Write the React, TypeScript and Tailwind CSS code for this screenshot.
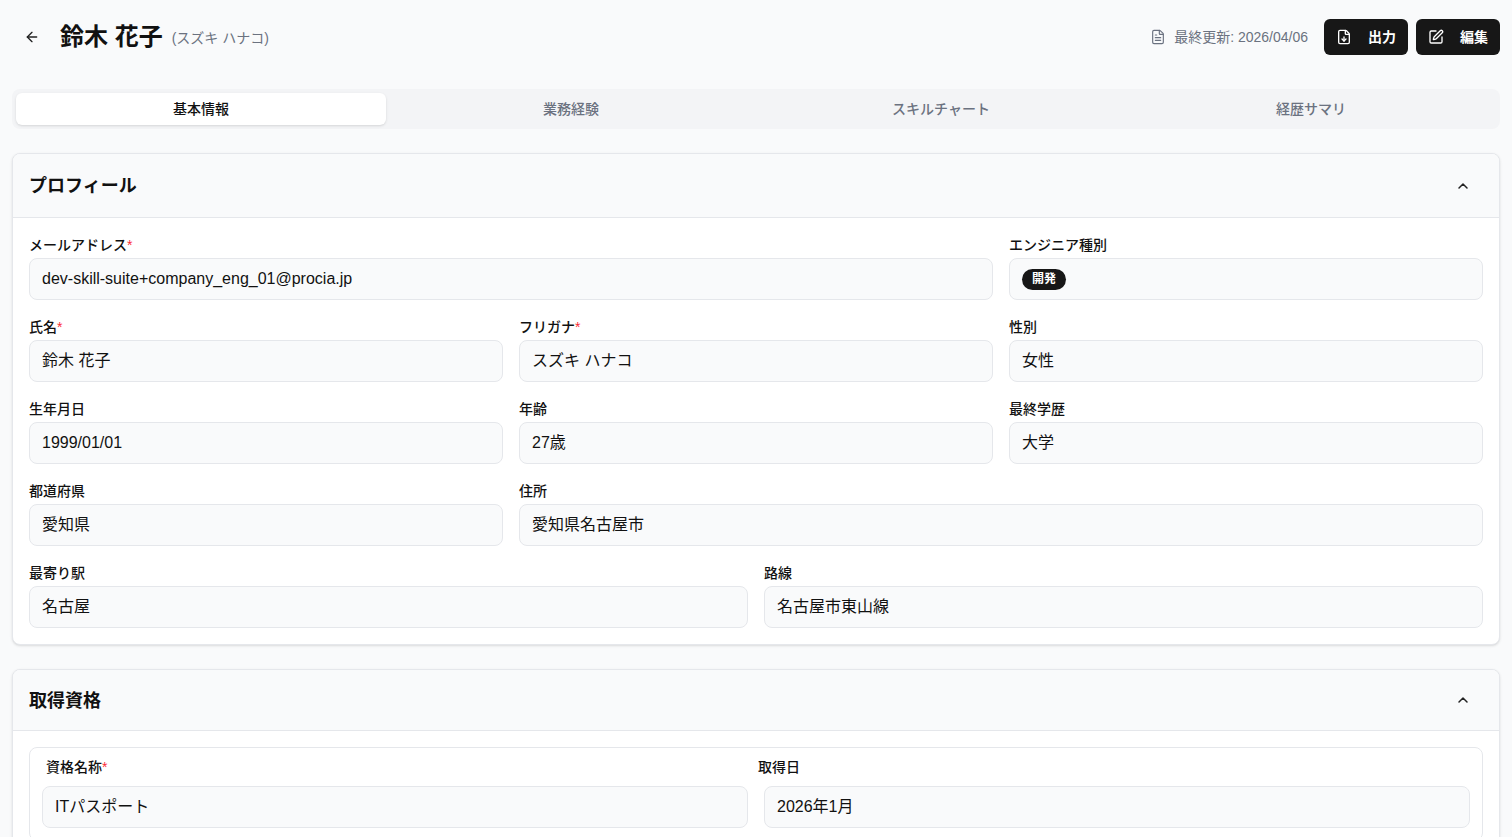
import React from 'react';
import { ArrowLeft, FileText, FileDown, SquarePen, ChevronUp } from 'lucide-react';

const FONT = { fontFamily: '"Liberation Sans", "Noto Sans CJK JP", sans-serif' };

const TABS = ['基本情報', '業務経験', 'スキルチャート', '経歴サマリ'];

const Field: React.FC<{ label: string; required?: boolean; className?: string; children: React.ReactNode }> = ({
  label,
  required,
  className = '',
  children,
}) => (
  <div className={className}>
    <div className="h-5 mb-1 pt-px text-sm font-medium text-[#111] leading-5">
      {label}
      {required && <span className="text-red-500">*</span>}
    </div>
    <div className="h-[42px] flex items-center px-3 rounded-lg border border-[#e5e7eb] bg-[#f9fafb] text-base text-[#111]">
      {children}
    </div>
  </div>
);

const SectionHeader: React.FC<{ title: string; h: string }> = ({ title, h }) => (
  <div className={`${h} flex items-center justify-between px-4 bg-[#f9fafb] border-b border-[#e5e7eb]`}>
    <h2 className="text-lg font-bold text-[#111] pt-px">{title}</h2>
    <ChevronUp className="w-4 h-4 text-[#222] mr-3" strokeWidth={2.25} />
  </div>
);

export default function App() {
  return (
    <div className="min-h-screen bg-[#f9fafb] px-3 pb-10" style={FONT}>
      {/* Header */}
      <div className="pt-[19px] flex items-center justify-between">
        <div className="flex items-center gap-3 pl-1">
          <button className="w-8 h-8 flex items-center justify-center text-[#222]">
            <ArrowLeft className="w-4 h-4" strokeWidth={2} />
          </button>
          <div className="flex items-center gap-[9px]">
            <h1 className="text-2xl font-bold text-[#111]">鈴木 花子</h1>
            <span className="text-sm text-[#6b7280] pt-px">(スズキ ハナコ)</span>
          </div>
        </div>
        <div className="flex items-center gap-2">
          <div className="flex items-center gap-2 text-sm text-[#6b7280] mr-2">
            <FileText className="w-4 h-4" strokeWidth={1.75} />
            <span>最終更新: 2026/04/06</span>
          </div>
          <button className="h-9 w-[84px] flex items-center gap-4 px-3 rounded-md bg-[#171717] text-white text-sm font-bold">
            <FileDown className="w-4 h-4" strokeWidth={2} />
            出力
          </button>
          <button className="h-9 w-[84px] flex items-center gap-4 px-3 rounded-md bg-[#171717] text-white text-sm font-bold">
            <SquarePen className="w-4 h-4" strokeWidth={2} />
            編集
          </button>
        </div>
      </div>

      {/* Tabs */}
      <div className="mt-[34px] h-10 p-1 grid grid-cols-4 rounded-lg bg-[#f3f4f6]">
        {TABS.map((t, i) => (
          <div
            key={t}
            className={`flex items-center justify-center rounded-md text-sm font-medium ${
              i === 0 ? 'bg-white text-[#111] shadow-sm' : 'text-[#6b7280]'
            }`}
          >
            {t}
          </div>
        ))}
      </div>

      {/* Profile */}
      <div className="mt-6 rounded-lg border border-[#e5e7eb] bg-white overflow-hidden shadow-sm">
        <SectionHeader title="プロフィール" h="h-16" />
        <div className="p-4 flex flex-col gap-4">
          <div className="grid grid-cols-3 gap-4">
            <Field label="メールアドレス" required className="col-span-2">
              dev-skill-suite+company_eng_01@procia.jp
            </Field>
            <Field label="エンジニア種別">
              <span className="h-[21px] px-2.5 flex items-center rounded-full bg-[#171717] text-white text-xs font-bold">
                開発
              </span>
            </Field>
          </div>
          <div className="grid grid-cols-3 gap-4">
            <Field label="氏名" required>鈴木 花子</Field>
            <Field label="フリガナ" required>スズキ ハナコ</Field>
            <Field label="性別">女性</Field>
          </div>
          <div className="grid grid-cols-3 gap-4">
            <Field label="生年月日">1999/01/01</Field>
            <Field label="年齢">27歳</Field>
            <Field label="最終学歴">大学</Field>
          </div>
          <div className="grid grid-cols-3 gap-4">
            <Field label="都道府県">愛知県</Field>
            <Field label="住所" className="col-span-2">愛知県名古屋市</Field>
          </div>
          <div className="grid grid-cols-2 gap-4">
            <Field label="最寄り駅">名古屋</Field>
            <Field label="路線">名古屋市東山線</Field>
          </div>
        </div>
      </div>

      {/* Qualifications */}
      <div className="mt-6 rounded-lg border border-[#e5e7eb] bg-white overflow-hidden shadow-sm">
        <SectionHeader title="取得資格" h="h-[61px]" />
        <div className="p-4">
          <div className="rounded-lg border border-[#e5e7eb] bg-white px-3 pt-[9px] pb-3">
            <div className="grid grid-cols-2 gap-4">
              <div>
                <div className="h-5 mb-[9px] ml-1 text-sm font-medium text-[#111] leading-5">
                  資格名称<span className="text-red-500">*</span>
                </div>
                <div className="h-[42px] flex items-center px-3 rounded-lg border border-[#e5e7eb] bg-[#f9fafb] text-base text-[#111]">
                  ITパスポート
                </div>
              </div>
              <div>
                <div className="h-5 mb-[9px] -ml-1.5 text-sm font-medium text-[#111] leading-5">取得日</div>
                <div className="h-[42px] flex items-center px-3 rounded-lg border border-[#e5e7eb] bg-[#f9fafb] text-base text-[#111]">
                  2026年1月
                </div>
              </div>
            </div>
          </div>
        </div>
      </div>
    </div>
  );
}
